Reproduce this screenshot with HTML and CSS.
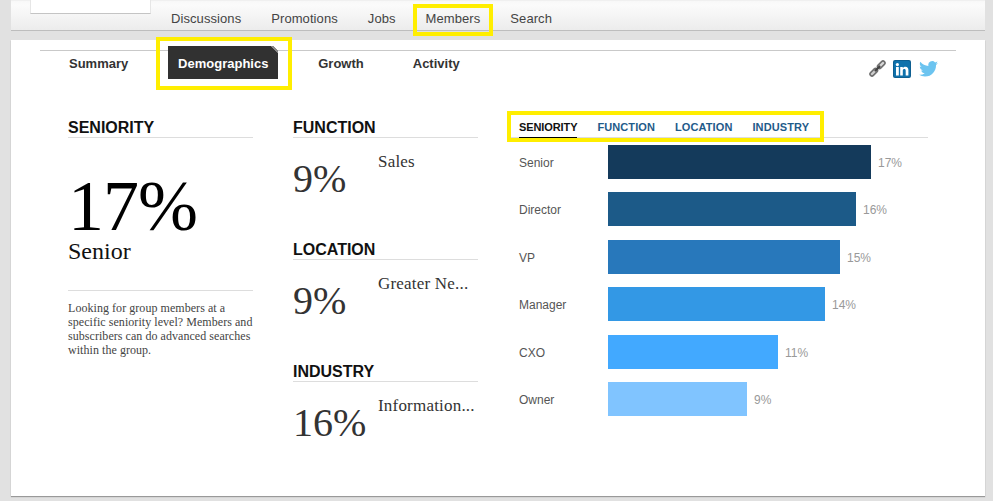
FILE: index.html
```html
<!DOCTYPE html>
<html lang="en">
<head>
<meta charset="utf-8">
<title>Members - Demographics</title>
<link rel="stylesheet" href="styles.css">
</head>
<body>
<div class="page">
  <header class="topbar">
    <div class="logo-card"></div>
    <nav class="mainnav">
      <a>Discussions</a>
      <a>Promotions</a>
      <a>Jobs</a>
      <a class="marked marked-nav">Members</a>
      <a>Search</a>
    </nav>
  </header>
  <main class="card">
    <div class="subnav">
      <div class="tabs">
        <a class="tab tab-summary">Summary</a>
        <a class="tab tab-active marked marked-tab">Demographics</a>
        <a class="tab tab-growth">Growth</a>
        <a class="tab tab-activity">Activity</a>
      </div>
      <div class="social">
        <svg class="ico-link" width="18" height="18" viewBox="0 0 18 18"><g fill="none" stroke-linecap="round"><path d="M3 14l3.500-3.500" stroke="#6f6f6f" stroke-width="5.500"/><path d="M3 14l3.500-3.500" stroke="#cfcfcf" stroke-width="2.400"/><path d="M10.500 6.500L14 3" stroke="#6f6f6f" stroke-width="5.500"/><path d="M10.500 6.500L14 3" stroke="#d8d8d8" stroke-width="2.400"/><path d="M6.500 10.500l4-4" stroke="#444" stroke-width="2.200"/></g></svg>
        <svg class="ico-in" width="18" height="18" viewBox="0 0 18 18"><rect width="18" height="18" rx="2" fill="#0e5f91"/><rect x="1" y="1" width="16" height="16" rx="1.500" fill="#1072ac"/><rect x="3" y="7" width="2.800" height="8.500" fill="#fff"/><circle cx="4.400" cy="4.600" r="1.600" fill="#fff"/><path d="M7.200 7h2.600v1.200c.5-.8 1.400-1.400 2.600-1.400 2 0 3 1.300 3 3.400v5.300h-2.700v-4.800c0-1-.4-1.700-1.300-1.700-1 0-1.600.7-1.600 1.700v4.800H7.200z" fill="#fff"/></svg>
        <svg class="ico-tw" width="19" height="16" viewBox="0 0 24 20"><path d="M24 2.400c-.9.4-1.800.7-2.800.8 1-.6 1.800-1.600 2.200-2.700-1 .6-2 1-3.100 1.200A4.900 4.900 0 0 0 11.900 6.200C7.800 6 4.200 4 1.700.9c-1.300 2.200-.7 5.100 1.500 6.600-.8 0-1.600-.2-2.200-.6 0 2.400 1.700 4.400 3.900 4.900-.7.2-1.500.2-2.200.1.6 2 2.400 3.400 4.600 3.400A9.900 9.900 0 0 1 0 17.300 14 14 0 0 0 7.500 19.500c9.100 0 14.300-7.700 14-14.600 1-.7 1.800-1.500 2.500-2.500z" fill="#6cc4f0"/></svg>
      </div>
    </div>
    <div class="columns">
      <section class="col col-main">
        <h2 class="col-title">SENIORITY</h2>
        <div class="big-num">17%</div>
        <div class="big-label">Senior</div>
        <p class="note">Looking for group members at a<br>specific seniority level? Members and<br>subscribers can do advanced searches<br>within the group.</p>
      </section>
      <section class="col col-stats">
        <div class="stat">
          <h2 class="col-title">FUNCTION</h2>
          <div class="stat-row"><span class="stat-num">9%</span><span class="stat-label">Sales</span></div>
        </div>
        <div class="stat">
          <h2 class="col-title">LOCATION</h2>
          <div class="stat-row"><span class="stat-num">9%</span><span class="stat-label">Greater Ne...</span></div>
        </div>
        <div class="stat">
          <h2 class="col-title">INDUSTRY</h2>
          <div class="stat-row"><span class="stat-num">16%</span><span class="stat-label">Information...</span></div>
        </div>
      </section>
      <section class="col col-chart">
        <div class="chart-tabs marked marked-chart">
          <a class="chart-tab chart-tab-on">SENIORITY</a>
          <a class="chart-tab">FUNCTION</a>
          <a class="chart-tab">LOCATION</a>
          <a class="chart-tab">INDUSTRY</a>
        </div>
        <div class="bars">
          <div class="bar-row"><span class="bar-name">Senior</span><span class="bar c1" style="width:263px"></span><span class="bar-val">17%</span></div>
          <div class="bar-row"><span class="bar-name">Director</span><span class="bar c2" style="width:248px"></span><span class="bar-val">16%</span></div>
          <div class="bar-row"><span class="bar-name">VP</span><span class="bar c3" style="width:232px"></span><span class="bar-val">15%</span></div>
          <div class="bar-row"><span class="bar-name">Manager</span><span class="bar c4" style="width:217px"></span><span class="bar-val">14%</span></div>
          <div class="bar-row"><span class="bar-name">CXO</span><span class="bar c5" style="width:170px"></span><span class="bar-val">11%</span></div>
          <div class="bar-row"><span class="bar-name">Owner</span><span class="bar c6" style="width:139px"></span><span class="bar-val">9%</span></div>
        </div>
      </section>
    </div>
  </main>
</div>
</body>
</html>
```

FILE: styles.css
```css
* { box-sizing: border-box; }
html, body { margin: 0; padding: 0; }
body {
  width: 993px;
  height: 501px;
  overflow: hidden;
  background: #e1e1e1;
  font-family: "Liberation Sans", Arial, sans-serif;
}
.page {
  width: 974px;
  margin-left: 11px;
  display: flex;
  flex-direction: column;
}
.marked { position: relative; }
.marked::after {
  content: "";
  box-sizing: border-box;
  position: absolute;
  border: 4px solid #ffee00;
  pointer-events: none;
}
.marked-nav::after { left: -13px; right: -13px; top: -7px; bottom: -10px; }
.marked-tab::after { left: -12px; right: -14px; top: -9px; bottom: -11px; }
.marked-chart::after { left: -1px; top: -7px; width: 317px; height: 31px; }

.topbar {
  height: 31px;
  position: relative;
  background: linear-gradient(#f8f8f8, #fbfbfb 4px, #ececec);
  border-top: 1px solid #f0f0f0;
  border-bottom: 1px solid #bdbdbd;
  display: flex;
  padding-left: 160px;
}
.logo-card {
  position: absolute;
  left: 19px;
  top: -1px;
  width: 121px;
  height: 14px;
  background: #fff;
  border: 1px solid #e6e6e6;
  border-top: 0;
  border-bottom-color: #c4c4c4;
}
.mainnav {
  display: flex;
  gap: 30px;
  align-items: center;
  height: 28px;
  margin-top: 3px;
  font-size: 13px;
  letter-spacing: .08px;
  color: #444;
}
.card {
  margin-top: 9px;
  height: 456px;
  background: #fff;
  box-shadow: 0 1px 1px #999;
  padding: 10px 29px 0;
}
.subnav {
  height: 51px;
  border-top: 1px solid #c9c9c9;
  display: flex;
  justify-content: space-between;
}
.tabs {
  display: flex;
  align-items: flex-start;
  font-size: 13px;
  font-weight: 700;
  color: #333;
}
.tab { display: block; line-height: 15px; padding-top: 5px; }
.tab-summary { margin-left: 29px; }
.tab-active {
  margin: -5px 0 0 40px;
  width: 110px;
  height: 33px;
  padding-top: 10px;
  text-align: center;
  background: linear-gradient(225deg, #fff 0, #fff 3px, #8a8a8a 3px, #8a8a8a 5px, #313131 5px);
  color: #fff;
}
.tab-growth { margin-left: 40px; }
.tab-activity { margin-left: 49px; }
.social {
  display: flex;
  gap: 6px;
  align-items: center;
  height: 18px;
  margin-top: 9px;
  margin-right: 18px;
}
.ico-tw { margin-left: 2px; }
.columns {
  display: flex;
  margin-left: 28px;
  padding-top: 17px;
}
.col-main { width: 185px; margin-right: 40px; }
.col-stats { width: 185px; margin-right: 30px; }
.col-chart { width: 420px; }
.col-title {
  margin: 0;
  height: 20px;
  line-height: 19px;
  font-size: 16px;
  font-weight: 700;
  color: #111;
  border-bottom: 1px solid #ddd;
}
.big-num {
  font-family: "Liberation Serif", "Times New Roman", serif;
  font-size: 72px;
  line-height: 60px;
  color: #000;
  margin-top: 38px;
  letter-spacing: -1px;
}
.big-label {
  font-family: "Liberation Serif", "Times New Roman", serif;
  font-size: 24px;
  line-height: 28px;
  color: #111;
  margin-top: 1px;
}
.note {
  margin: 25px 0 0;
  padding-top: 10px;
  border-top: 1px solid #ddd;
  font-family: "Liberation Serif", "Times New Roman", serif;
  font-size: 12px;
  line-height: 14px;
  letter-spacing: .05px;
  color: #444;
  white-space: nowrap;
}
.stat { height: 122px; }
.stat-row {
  display: flex;
  font-family: "Liberation Serif", "Times New Roman", serif;
  color: #333;
}
.stat-num {
  width: 85px;
  font-size: 40px;
  line-height: 46px;
  margin-top: 18px;
}
.stat-label {
  font-size: 17px;
  line-height: 20px;
  margin-top: 14px;
  letter-spacing: .2px;
  white-space: nowrap;
}
.chart-tabs {
  display: flex;
  gap: 20px;
  height: 20px;
  padding-left: 11px;
  border-bottom: 1px solid #ddd;
}
.chart-tab {
  height: 20px;
  line-height: 19px;
  font-size: 11px;
  font-weight: 700;
  letter-spacing: .1px;
  color: #1f5b8a;
}
.chart-tab-on {
  color: #111;
  letter-spacing: -.1px;
  border-bottom: 1px solid #000;
}
.bars {
  display: flex;
  flex-direction: column;
  gap: 13.4px;
  margin-top: 7px;
}
.bar-row {
  display: flex;
  align-items: center;
  height: 34px;
  padding-left: 11px;
  font-size: 12px;
}
.bar-name { width: 89px; color: #555; padding-top: 2px; }
.bar { display: block; height: 34px; }
.bar-val { margin-left: 7px; color: #999; padding-top: 2px; }
.c1 { background: #143a5b; }
.c2 { background: #1c5a88; }
.c3 { background: #2878bb; }
.c4 { background: #3398e5; }
.c5 { background: #42a9ff; }
.c6 { background: #80c4ff; }
```
